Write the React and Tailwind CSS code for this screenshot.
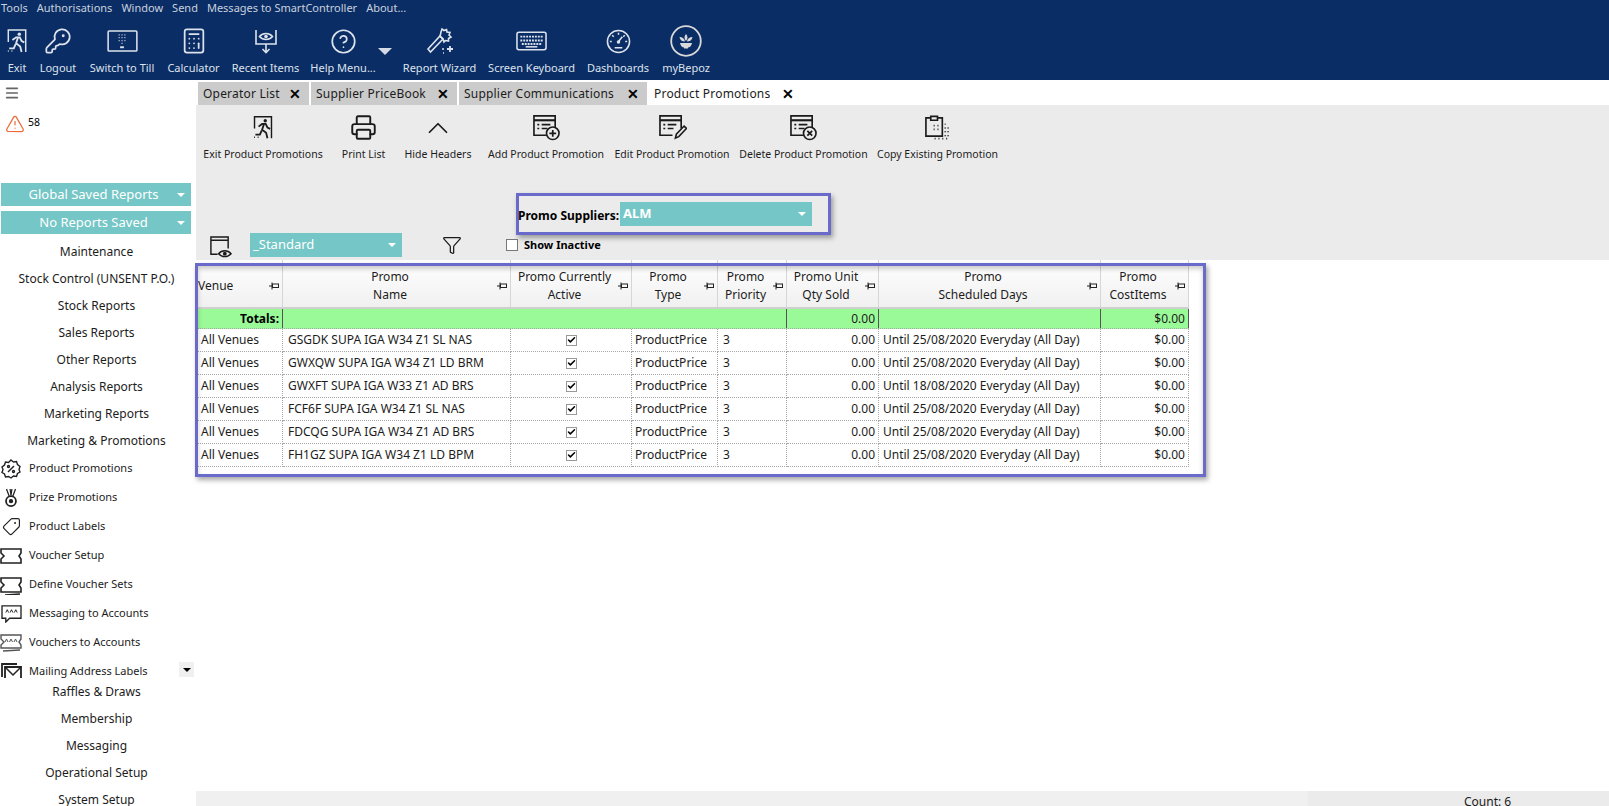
import React from "react";
import { KeyRound, Calculator, CircleHelp, Printer, ChevronUp, Funnel, Menu, TriangleAlert, Tag, Check, ChevronDown } from "lucide-react";

const ExitIcon = ({ className }) => (
  <svg viewBox="0 0 24 28" className={className} fill="none" stroke="currentColor" strokeWidth="1.6">
    <path d="M2.5 15V2h19v24" />
    <circle cx="14.5" cy="6.5" r="1.9" fill="currentColor" stroke="none" />
    <path d="M7 13l4-3h4l2 4 3 1.5M13 10.5l-2 6 4.5 3.500 1.500 6M10.500 17.500l-2 4.500H3.500" strokeWidth="2" />
    <path d="M2 25h1M6 25h1" />
  </svg>
);

const TillIcon = () => (
  <svg viewBox="0 0 32 24" className="w-[31px] h-[23px]" fill="none" stroke="currentColor" strokeWidth="1.6">
    <rect x="1" y="1" width="30" height="21" rx="1" />
    <path d="M12 5h1M15 5h1M18 5h1M12 8h1M15 8h1M18 8h1M12 11h1M15 11h1M18 11h1M15 14h1" strokeWidth="1.300" />
    <path d="M13.500 18h4" strokeWidth="2" />
  </svg>
);

const RecentIcon = () => (
  <svg viewBox="0 0 24 26" className="w-[24px] h-[26px]" fill="none" stroke="currentColor" strokeWidth="1.6">
    <path d="M2 2v14h20V2M12 16v8M8.500 21l3.500 3.500 3.500-3.500" />
    <path d="M5.500 8.500c3.500-4 9.500-4 13 0-3.500 4-9.500 4-13 0z" />
    <circle cx="12" cy="8.500" r="1.800" fill="currentColor" stroke="none" />
  </svg>
);

const WandIcon = () => (
  <svg viewBox="0 0 28 28" className="w-[28px] h-[28px]" fill="none" stroke="currentColor" strokeWidth="1.600">
    <path d="M2 22l12-13 3 3L4.500 25z" />
    <path d="M15 5l1-3 2 1.500 2.500-1 .5 2.500 3 .5-1 2.500 2 2-2.500 1.500v2.500l-3-.5-1.500 1.500-1-3-3-2.500z" />
    <path d="M24 19v6M21 22h6" strokeWidth="1.800" />
    <path d="M16 22h2M17 26h1" strokeWidth="1.600" />
  </svg>
);

const KeyboardIcon = () => (
  <svg viewBox="0 0 32 20" className="w-[31px] h-[20px]" fill="none" stroke="currentColor" strokeWidth="1.600">
    <rect x="1" y="1" width="30" height="18" rx="2" />
    <path d="M4.500 5.500h23M4.500 9.500h23M6 13h20" strokeWidth="2" strokeDasharray="2 1" />
    <path d="M10 16h12" strokeWidth="1.600" />
  </svg>
);

const GaugeIcon = () => (
  <svg viewBox="0 0 26 26" className="w-[25px] h-[25px]" fill="none" stroke="currentColor" strokeWidth="1.600">
    <circle cx="13" cy="13" r="11.500" />
    <path d="M13 4v2M6.500 6.500l1.500 1.500M4 13h2M20 13h2M19.500 6.500L18 8M13 13l4-5" />
    <circle cx="13" cy="13.500" r="1.800" fill="currentColor" stroke="none" />
    <path d="M9 19.500h8" />
  </svg>
);

const BepozIcon = () => (
  <svg viewBox="0 0 32 32" className="w-[32px] h-[32px]">
    <circle cx="16" cy="16" r="14.800" fill="none" stroke="#d9d9d9" strokeWidth="1.800" />
    <path d="M16 9c2 2 2 5 0 7-2-2-2-5 0-7zM9.500 12c3 0 5 1.500 5.500 4.500-3 0-5-1.500-5.500-4.500zM22.500 12c-3 0-5 1.500-5.500 4.500 3 0 5-1.500 5.500-4.500zM10 18h12c-.5 3-2.500 4.500-4 4.500v1h-4v-1c-1.500 0-3.500-1.500-4-4.500z" fill="#d9d9d9" />
  </svg>
);

const SheetIcon = ({ badge }) => (
  <svg viewBox="0 0 30 28" className="w-[29px] h-[27px]" fill="none" stroke="#1a1a1a" strokeWidth="1.700">
    <path d="M15 22H2V2h22v13" />
    <path d="M2 6.500h22" strokeWidth="2.200" />
    <path d="M5.500 11h2M10 11h9M5.500 15h2M10 15h6" />
    {badge === "add" && (
      <>
        <circle cx="21.500" cy="20" r="6.500" fill="#ebebeb" />
        <path d="M21.500 16.500v7M18 20h7" strokeWidth="1.800" />
      </>
    )}
    {badge === "del" && (
      <>
        <circle cx="21.500" cy="20" r="6.500" fill="#ebebeb" />
        <path d="M19 17.500l5 5M24 17.500l-5 5" strokeWidth="1.800" />
      </>
    )}
    {badge === "edit" && <path d="M18 25l1-4 8-8.500 2.500 2.500-8 8.500z" fill="#ebebeb" />}
  </svg>
);

const CopyIcon = () => (
  <svg viewBox="0 0 28 28" className="w-[27px] h-[27px]" fill="none" stroke="#1a1a1a" strokeWidth="1.700">
    <path d="M7 4H2v19h17V4h-5M7 2.500h7v4H7z" />
    <path d="M10 12h1M14 12h1M10 16h1M14 16h1" />
    <path d="M22 10v1M22 14v1M22 18v1M22 22v1M25 14v1M25 18v1M25 22v1M11 25.500h1M15 25.500h1M19 25.500h1M23 25.500h1" />
  </svg>
);

const EyeWindowIcon = () => (
  <svg viewBox="0 0 24 24" className="w-[23px] h-[23px]" fill="none" stroke="#1a1a1a" strokeWidth="1.500">
    <path d="M9 20H2V2h18v12M2 5.500h18" />
    <path d="M10 19.500c3.500-4 9.500-4 13 0-3.500 4-9.500 4-13 0z" />
    <circle cx="16.500" cy="19.500" r="2" fill="#1a1a1a" stroke="none" />
  </svg>
);

const PinIcon = () => (
  <svg viewBox="0 0 10 8" className="w-[10px] h-[8px] shrink-0" fill="none" stroke="#222" strokeWidth="1">
    <path d="M0 4h3M3 .5v7" />
    <rect x="3.500" y="2" width="6" height="3.500" />
  </svg>
);

const Caret = ({ className }) => (
  <span className={`w-0 h-0 border-l-[4px] border-r-[4px] border-t-[4px] border-l-transparent border-r-transparent ${className}`} />
);

const SubIcon = ({ name }) => {
  if (name === "promo")
    return (
      <svg viewBox="0 0 20 20" className="w-[20px] h-[20px]" fill="none" stroke="#222" strokeWidth="1.400">
        <path d="M10 1l2.500 2 3-.5 1 3 2.500 2-1 3 1 2.500-2.500 1.500-1 3-3-.5L10 19l-2.500-1.500-3 .5-1-3L1 13.500l1-3-1-2.500 2.500-2 1-3 3 .5z" />
        <path d="M7 13l6-6" />
        <circle cx="7.500" cy="7.500" r="1" />
        <circle cx="12.500" cy="12.500" r="1" />
      </svg>
    );
  if (name === "prize")
    return (
      <svg viewBox="0 0 20 22" className="w-[18px] h-[20px]" fill="none" stroke="#222" strokeWidth="1.400">
        <path d="M5 1l3 8M15 1l-3 8M9 1l1 7M11 1l-1 7" />
        <circle cx="10" cy="14.500" r="5.500" strokeWidth="2" />
        <circle cx="10" cy="14.500" r="1.700" fill="#222" />
      </svg>
    );
  if (name === "label") return <Tag className="w-[19px] h-[19px] -scale-x-100 text-[#222]" strokeWidth={1.500} />;
  if (name === "voucher" || name === "vset")
    return (
      <svg viewBox="0 0 22 20" className="w-[22px] h-[20px]" fill="none" stroke="#222" strokeWidth="1.600">
        <path d="M1 3h20v4l-2 3 2 3v4H1v-4l3-3-3-3z" />
        {name === "vset" && <path d="M5 20l15-1" />}
      </svg>
    );
  if (name === "msg")
    return (
      <svg viewBox="0 0 22 20" className="w-[21px] h-[19px]" fill="none" stroke="#222" strokeWidth="1.400">
        <path d="M1 2h20v13H9l-4 4v-4H1z" />
        <path d="M5 9l1.500-3 1.500 3M9.500 9l1.500-3 1.500 3M14 9l1.500-3 1.500 3" strokeWidth="1" />
      </svg>
    );
  if (name === "vacc")
    return (
      <svg viewBox="0 0 22 20" className="w-[22px] h-[20px]" fill="none" stroke="#555" strokeWidth="1.400">
        <path d="M1 2h20v4l-2 3 2 3v3H1v-3l3-3-3-3z" />
        <path d="M5 9l1.500-3 1.500 3M9.500 9l1.500-3 1.500 3M14 9l1.500-3 1.500 3" strokeWidth="1" />
        <path d="M3 18l17-1" />
      </svg>
    );
  return (
    <svg viewBox="0 0 22 20" className="w-[22px] h-[20px]" fill="none" stroke="#222" strokeWidth="1.500">
      <path d="M2 15V2h15" strokeWidth="1.800" />
      <path d="M5 5h16v14H5z" strokeWidth="1.800" />
      <path d="M5 5l8 8 8-8" />
    </svg>
  );
};

const topTools = [
  { label: "Exit", w: "w-[18px]", icon: <ExitIcon className="w-[22px] h-[26px]" /> },
  { label: "Logout", w: "w-[36px]", icon: <KeyRound className="w-[28px] h-[28px] -scale-x-100 scale-x-100" strokeWidth={1.500} /> },
  { label: "Switch to Till", w: "w-[64px]", icon: <TillIcon /> },
  { label: "Calculator", w: "w-[51px]", icon: <Calculator className="w-[28px] h-[28px]" strokeWidth={1.500} /> },
  { label: "Recent Items", w: "w-[65px]", icon: <RecentIcon /> },
  { label: "Help Menu...", w: "w-[62px]", icon: <CircleHelp className="w-[27px] h-[27px]" strokeWidth={1.500} /> },
];

const topTools2 = [
  { label: "Report Wizard", w: "w-[71px]", icon: <WandIcon /> },
  { label: "Screen Keyboard", w: "w-[83px]", icon: <KeyboardIcon /> },
  { label: "Dashboards", w: "w-[60px]", icon: <GaugeIcon /> },
  { label: "myBepoz", w: "w-[46px]", icon: <BepozIcon /> },
];

const tabs = [
  { label: "Operator List", w: "w-[111px]" },
  { label: "Supplier PriceBook", w: "w-[146px]" },
  { label: "Supplier Communications", w: "w-[188px]" },
  { label: "Product Promotions", w: "w-[153px]", active: true },
];

const actions = [
  { label: "Exit Product Promotions", w: "w-[120px]", ml: "ml-[7px]", icon: <ExitIcon className="w-[22px] h-[25px] text-[#1a1a1a]" /> },
  { label: "Print List", w: "w-[43px]", ml: "ml-[19px]", icon: <Printer className="w-[27px] h-[27px] text-[#1a1a1a]" strokeWidth={1.700} /> },
  { label: "Hide Headers", w: "w-[68px]", ml: "ml-[19px]", icon: <ChevronUp className="w-[34px] h-[34px] -my-[3px] text-[#1a1a1a]" strokeWidth={1.200} /> },
  { label: "Add Product Promotion", w: "w-[118px]", ml: "ml-[15px]", icon: <SheetIcon badge="add" /> },
  { label: "Edit Product Promotion", w: "w-[116px]", ml: "ml-[9px]", icon: <SheetIcon badge="edit" /> },
  { label: "Delete Product Promotion", w: "w-[129px]", ml: "ml-[9px]", icon: <SheetIcon badge="del" /> },
  { label: "Copy Existing Promotion", w: "w-[123px]", ml: "ml-[8px]", icon: <CopyIcon /> },
];

const mainMenu = ["Maintenance", "Stock Control (UNSENT P.O.)", "Stock Reports", "Sales Reports", "Other Reports", "Analysis Reports", "Marketing Reports", "Marketing & Promotions"];
const subMenu = [
  ["promo", "Product Promotions"],
  ["prize", "Prize Promotions"],
  ["label", "Product Labels"],
  ["voucher", "Voucher Setup"],
  ["vset", "Define Voucher Sets"],
  ["msg", "Messaging to Accounts"],
  ["vacc", "Vouchers to Accounts"],
  ["mail", "Mailing Address Labels"],
];
const lowerMenu = ["Raffles & Draws", "Membership", "Messaging", "Operational Setup", "System Setup"];

const gridCols = "grid grid-cols-[85px_228px_121px_86px_69px_92px_222px_88px]";

const headers = [
  ["Venue"],
  ["Promo", "Name"],
  ["Promo Currently", "Active"],
  ["Promo", "Type"],
  ["Promo", "Priority"],
  ["Promo Unit", "Qty Sold"],
  ["Promo", "Scheduled Days"],
  ["Promo", "CostItems"],
];

const rows = [
  ["GSGDK SUPA IGA W34 Z1 SL NAS", "Until 25/08/2020 Everyday (All Day)"],
  ["GWXQW SUPA IGA W34 Z1 LD BRM", "Until 25/08/2020 Everyday (All Day)"],
  ["GWXFT SUPA IGA W33 Z1 AD BRS", "Until 18/08/2020 Everyday (All Day)"],
  ["FCF6F SUPA IGA W34 Z1 SL NAS", "Until 25/08/2020 Everyday (All Day)"],
  ["FDCQG SUPA IGA W34 Z1 AD BRS", "Until 25/08/2020 Everyday (All Day)"],
  ["FH1GZ SUPA IGA W34 Z1 LD BPM", "Until 25/08/2020 Everyday (All Day)"],
];

const cell = "h-[23px] border-r border-b border-dotted border-[#a8a8a8] flex items-center px-[3px] whitespace-nowrap";

export default function App() {
  return (
    <div className="h-screen w-full overflow-hidden bg-white flex flex-col text-[#1c1c1c] font-['Noto_Sans',sans-serif]">
      {/* top bar */}
      <div className="h-[80px] shrink-0 bg-[#0b2d65] text-[#dde3ec]">
        <div className="h-[17px] flex items-center gap-[9px] pl-[1px] text-[11px] text-[#c8d1de]">
          <span>Tools</span>
          <span>Authorisations</span>
          <span>Window</span>
          <span>Send</span>
          <span>Messages to SmartController</span>
          <span>About...</span>
        </div>
        <div className="flex pl-[8px] pt-[8px]">
          <div className="flex gap-[14px]">
            {topTools.map((t) => (
              <div key={t.label} className={`${t.w} flex flex-col items-center`}>
                <div className="h-[32px] flex items-center justify-center">{t.icon}</div>
                <span className="mt-[3px] text-[11px] leading-[15px] whitespace-nowrap">{t.label}</span>
              </div>
            ))}
          </div>
          <Caret className="mt-[23px] ml-[4px] !border-l-[7px] !border-r-[7px] !border-t-[7px] border-t-[#d5dbe5]" />
          <div className="flex gap-[15px] ml-[12px]">
            {topTools2.map((t) => (
              <div key={t.label} className={`${t.w} flex flex-col items-center`}>
                <div className="h-[32px] flex items-center justify-center">{t.icon}</div>
                <span className="mt-[3px] text-[11px] leading-[15px] whitespace-nowrap">{t.label}</span>
              </div>
            ))}
          </div>
        </div>
      </div>

      <div className="flex-1 flex min-h-0">
        {/* sidebar */}
        <aside className="w-[196px] shrink-0 relative overflow-hidden text-[12px]">
          <Menu className="absolute left-[4px] top-[5px] w-[16px] h-[16px] text-[#666]" strokeWidth={2.500} />
          <div className="h-[103px] pt-[34px] pl-[4px] flex items-start">
            <TriangleAlert className="w-[22px] h-[20px] text-[#ee6a3a]" strokeWidth={1.500} />
            <span className="ml-[2px] mt-[1px] text-[10.500px] text-black">58</span>
          </div>
          <div className="pl-[1px] pr-[5px] flex flex-col gap-[5px] text-[13px] text-white">
            {["Global Saved Reports", "No Reports Saved"].map((b) => (
              <div key={b} className="relative h-[23px] bg-[#75c6c6] flex items-center justify-center pr-[5px]">
                {b}
                <Caret className="absolute right-[6px] top-[10px] border-t-white" />
              </div>
            ))}
          </div>
          <div className="mt-[4px] text-center">
            {mainMenu.map((m) => (
              <div key={m} className="h-[27px] leading-[27px] pr-[3px] whitespace-nowrap">{m}</div>
            ))}
          </div>
          <div className="relative h-[224px] overflow-hidden text-[11px]">
            {subMenu.map(([icon, label]) => (
              <div key={label} className="h-[29px] flex items-center">
                <div className="w-[29px] flex justify-center pr-[7px]">
                  <SubIcon name={icon} />
                </div>
                <span className="whitespace-nowrap">{label}</span>
              </div>
            ))}
            <div className="absolute left-[179px] top-[208px] w-[15px] h-[15px] bg-[#f0f0f0] flex items-center justify-center">
              <Caret className="border-t-black" />
            </div>
          </div>
          <div className="text-center">
            {lowerMenu.map((m) => (
              <div key={m} className="h-[27px] leading-[27px] pr-[3px] whitespace-nowrap">{m}</div>
            ))}
          </div>
        </aside>

        {/* main */}
        <main className="flex-1 min-w-0 flex flex-col">
          <div className="h-[25px] shrink-0 flex pl-[2px] pt-[2px] gap-[2px] text-[12px] bg-white">
            {tabs.map((t) => (
              <div
                key={t.label}
                className={`${t.w} ${t.active ? "bg-white h-[24px]" : "bg-[#cbcbcb] h-[23px]"} flex items-center justify-between pl-[5px] pr-[8px]`}
              >
                <span className="whitespace-nowrap tracking-[0.2px]">{t.label}</span>
                <span className="text-[14px] font-bold leading-none text-black">✕</span>
              </div>
            ))}
          </div>

          <div className="h-[155px] shrink-0 bg-[#ebebeb]">
            <div className="flex h-[88px] pt-[8px]">
              {actions.map((a) => (
                <div key={a.label} className={`${a.w} ${a.ml} flex flex-col items-center`}>
                  <div className="h-[29px] flex items-center justify-center">{a.icon}</div>
                  <span className="mt-[5px] text-[10.500px] leading-[14px] whitespace-nowrap">{a.label}</span>
                </div>
              ))}
            </div>
            <div className="ml-[320px] w-[315px] h-[42px] border-[3px] border-[#6a6acb] shadow-[2px_3px_5px_rgba(0,0,0,0.35)] flex items-center">
              <span className="ml-[-1px] mt-[3px] text-[12px] font-bold text-black whitespace-nowrap">Promo Suppliers:</span>
              <div className="absolute-none ml-[1px] w-[192px] h-[24px] bg-[#75c6c6] flex items-center justify-between pl-[3px] pr-[6px] text-[13px] font-bold text-white">
                ALM
                <Caret className="border-t-white" />
              </div>
            </div>
            <div className="-mt-[2px] flex items-center h-[24px] text-[12px]">
              <div className="ml-[13px] mt-[3px]">
                <EyeWindowIcon />
              </div>
              <div className="ml-[18px] w-[152px] h-[24px] bg-[#75c6c6] flex items-center justify-between pl-[3px] pr-[6px] text-[13px] text-white">
                _Standard
                <Caret className="border-t-white" />
              </div>
              <Funnel className="ml-[40px] w-[20px] h-[20px] text-[#1a1a1a]" strokeWidth={1.500} />
              <div className="ml-[44px] w-[12px] h-[12px] bg-white border border-[#777]" />
              <span className="ml-[6px] font-bold text-[11px] text-black">Show Inactive</span>
            </div>
          </div>

          {/* grid */}
          <div className="flex-1 min-h-0 pl-[2px]">
            <div className="relative w-[991px] text-[12px]">
              <div className={`${gridCols} h-[49px] border-b-2 border-[#cfcfcf] bg-gradient-to-b from-white to-[#f0f0f0]`}>
                {headers.map((h, i) => (
                  <div key={h.join()} className="border-r border-[#d6d6d6] flex items-center pr-[3px] pt-[5px]">
                    <div className={`flex-1 min-w-0 whitespace-nowrap leading-[18px] ${i === 0 ? "text-left" : "text-center"}`}>
                      {h.map((line) => (
                        <div key={line}>{line}</div>
                      ))}
                    </div>
                    <PinIcon />
                  </div>
                ))}
              </div>
              <div className={`${gridCols} h-[20px] bg-[#9bfa98] border-b border-dotted border-[#a8a8a8]`}>
                <div className="border-r border-[#555] flex items-center justify-end pr-[3px] font-bold text-black">Totals:</div>
                <div className="col-span-4 border-r border-[#555]" />
                <div className="border-r border-[#555] flex items-center justify-end pr-[3px]">0.00</div>
                <div className="border-r border-[#555]" />
                <div className="border-r border-[#555] flex items-center justify-end pr-[3px]">$0.00</div>
              </div>
              {rows.map(([name, days]) => (
                <div key={name} className={gridCols}>
                  <div className={cell}>All Venues</div>
                  <div className={`${cell} pl-[5px]`}>{name}</div>
                  <div className={`${cell} justify-center`}>
                    <span className="w-[11px] h-[11px] bg-white border border-[#999] flex items-center justify-center">
                      <Check className="w-[10px] h-[10px] text-black" strokeWidth={4} />
                    </span>
                  </div>
                  <div className={cell}>ProductPrice</div>
                  <div className={`${cell} pl-[5px]`}>3</div>
                  <div className={`${cell} justify-end`}>0.00</div>
                  <div className={`${cell} pl-[4px]`}>{days}</div>
                  <div className={`${cell} justify-end`}>$0.00</div>
                </div>
              ))}
              <div className="h-[7px] w-[991px]" />
              {/* highlight round the grid */}
              <div className="absolute left-[-3px] top-[3px] w-[1011px] h-[214px] border-[3px] border-[#6a6acb] shadow-[2px_3px_5px_rgba(0,0,0,0.35),inset_0_3px_5px_rgba(0,0,0,0.2)] pointer-events-none" />
            </div>
          </div>

          <div className="h-[15px] shrink-0 flex overflow-hidden text-[12px]">
            <div className="w-[1112px] bg-[#f0f0f0]" />
            <div className="flex-1 bg-[#ebebeb] pl-[156px] pt-[3px] leading-[16px] whitespace-nowrap">Count: 6</div>
          </div>
        </main>
      </div>
    </div>
  );
}
